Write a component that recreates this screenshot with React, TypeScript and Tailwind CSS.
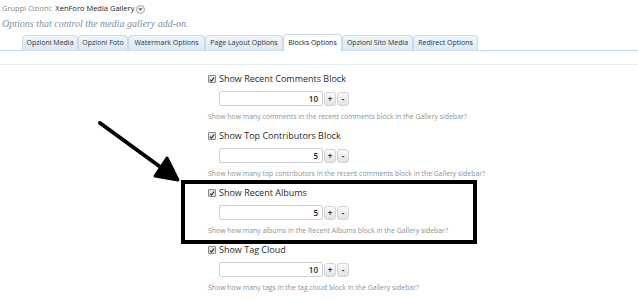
import React from "react";

const tabs = [
  { label: "Opzioni Media", w: 56 },
  { label: "Opzioni Foto", w: 50 },
  { label: "Watermark Options", w: 77 },
  { label: "Page Layout Options", w: 78 },
  { label: "Blocks Options", w: 59, active: true },
  { label: "Opzioni Sito Media", w: 71 },
  { label: "Redirect Options", w: 65 },
];

const options = [
  {
    label: "Show Recent Comments Block",
    value: "10",
    help: "Show how many comments in the recent comments block in the Gallery sidebar?",
  },
  {
    label: "Show Top Contributors Block",
    value: "5",
    help: "Show how many top contributors in the recent comments block in the Gallery sidebar?",
  },
  {
    label: "Show Recent Albums",
    value: "5",
    help: "Show how many albums in the Recent Albums block in the Gallery sidebar?",
  },
  {
    label: "Show Tag Cloud",
    value: "10",
    help: "Show how many tags in the tag cloud block in the Gallery sidebar?",
  },
];

function Checkbox() {
  return (
    <span className="flex h-[8px] w-[8px] items-center justify-center rounded-[1px] border border-[#8a8a8a] bg-[#e4e4e4]">
      <svg viewBox="0 0 8 8" className="h-[7px] w-[7px]">
        <path d="M1.2 4.2 L3.2 6.2 L6.8 1.4" fill="none" stroke="#333" strokeWidth="1.6" />
      </svg>
    </span>
  );
}

function SpinButton({ sign }: { sign: string }) {
  return (
    <span className="ml-[1px] flex h-[14px] w-[12px] items-center justify-center rounded-[3px] border border-[#d4d4d4] bg-gradient-to-b from-[#fafafa] to-[#e2e2e2] text-[8px] font-bold leading-none text-[#333]">
      {sign}
    </span>
  );
}

function OptionRow({ label, value, help }: { label: string; value: string; help: string }) {
  return (
    <div className="flex h-[57px] flex-col">
      <div className="flex h-[14px] items-center gap-[3px]">
        <Checkbox />
        <span className="text-[9px] text-[#2a2a2a]">{label}</span>
      </div>
      <div className="mt-[5px] flex h-[15px] items-center pl-[11px]">
        <div className="flex h-[15px] w-[104px] items-center justify-end rounded-[2px] border border-[#cfcfcf] bg-white pr-[4px] text-[8px] font-semibold text-[#222]">
          {value}
        </div>
        <SpinButton sign="+" />
        <SpinButton sign="-" />
      </div>
      <div className="mt-[6px] h-[9px] whitespace-nowrap text-[6.9px] leading-[9px] text-[#8e9298]">{help}</div>
    </div>
  );
}

export default function App() {
  return (
    <div
      className="relative h-[300px] w-[638px] overflow-hidden bg-white"
      style={{ fontFamily: '"Open Sans", "Liberation Sans", sans-serif' }}
    >
      <div className="flex h-[18px] items-center pl-[2px] text-[7.5px]">
        <span className="text-[#8a8a8a]">Gruppi Ozioni:</span>
        <span className="ml-[3px] text-[#222]">XenForo Media Gallery</span>
        <span className="ml-[2px] flex h-[9px] w-[9px] items-center justify-center rounded-full border border-[#9aa] bg-[#f4f4f4]">
          <svg viewBox="0 0 6 6" className="h-[5px] w-[5px]">
            <path d="M0.5 1.5 L5.5 1.5 L3 4.8 Z" fill="#666" />
          </svg>
        </span>
      </div>
      <div
        className="h-[15px] pl-[2px] text-[10px] italic leading-[12px] text-[#7c93a6]"
        style={{ fontFamily: '"Liberation Serif", serif' }}
      >
        Options that control the media gallery add-on.
      </div>
      <div className="flex h-[18px] items-end border-b border-[#cbdbe8] pl-[22px]">
        {tabs.map((t) =>
          t.active ? (
            <div
              key={t.label}
              style={{ width: t.w }}
              className="-mb-px flex h-[17px] items-center justify-center rounded-t-[4px] border border-b-0 border-[#cbdbe8] bg-white text-[7px] text-[#222]"
            >
              {t.label}
            </div>
          ) : (
            <div
              key={t.label}
              style={{ width: t.w }}
              className="flex h-[15px] items-center justify-center rounded-t-[4px] border border-b-0 border-[#cbdbe8] bg-gradient-to-b from-[#eef5fb] to-[#dde9f4] text-[7px] text-[#2a3340]"
            >
              {t.label}
            </div>
          )
        )}
      </div>
      <div className="mt-[13px] border-t border-[#e3edf4]" />
      <div className="pl-[208px] pt-[7px]">
        {options.map((o) => (
          <OptionRow key={o.label} {...o} />
        ))}
      </div>

      {/* annotation */}
      <div className="absolute left-[181px] top-[180px] h-[64px] w-[296px] border-[4px] border-black" />
      <svg className="absolute left-0 top-0" width="638" height="300">
        <line x1="100" y1="123" x2="170" y2="174" stroke="#000" strokeWidth="4" strokeLinecap="round" />
        <path d="M178 180 L155 176 L167 158 Z" fill="#000" stroke="#000" strokeWidth="3" strokeLinejoin="round" />
      </svg>
    </div>
  );
}
